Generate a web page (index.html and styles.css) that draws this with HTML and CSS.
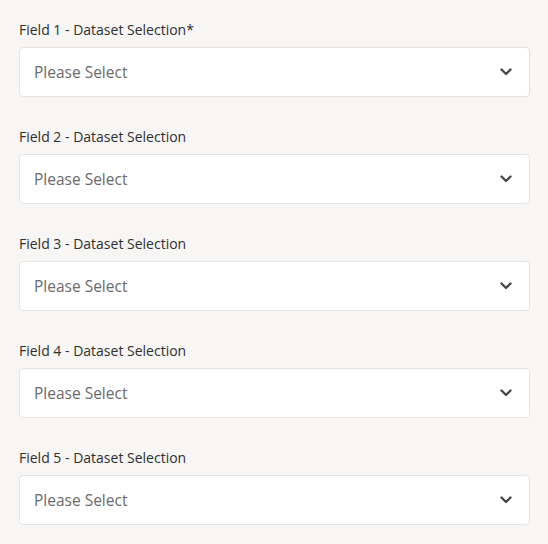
FILE: index.html
```html
<!DOCTYPE html>
<html>
<head>
<meta charset="utf-8">
<link rel="stylesheet" href="styles.css">
</head>
<body>
<div class="form">
  <div class="field">
    <div class="label">Field 1 - Dataset Selection*</div>
    <div class="select"><span class="placeholder">Please Select</span><svg class="chev" width="12" height="8" viewBox="0 0 12 8"><path d="M1.5 1.5 L6 6 L10.5 1.5" fill="none" stroke="#4a4a4a" stroke-width="2.4" stroke-linecap="round" stroke-linejoin="round"/></svg></div>
  </div>
  <div class="field">
    <div class="label">Field 2 - Dataset Selection</div>
    <div class="select"><span class="placeholder">Please Select</span><svg class="chev" width="12" height="8" viewBox="0 0 12 8"><path d="M1.5 1.5 L6 6 L10.5 1.5" fill="none" stroke="#4a4a4a" stroke-width="2.4" stroke-linecap="round" stroke-linejoin="round"/></svg></div>
  </div>
  <div class="field">
    <div class="label">Field 3 - Dataset Selection</div>
    <div class="select"><span class="placeholder">Please Select</span><svg class="chev" width="12" height="8" viewBox="0 0 12 8"><path d="M1.5 1.5 L6 6 L10.5 1.5" fill="none" stroke="#4a4a4a" stroke-width="2.4" stroke-linecap="round" stroke-linejoin="round"/></svg></div>
  </div>
  <div class="field">
    <div class="label">Field 4 - Dataset Selection</div>
    <div class="select"><span class="placeholder">Please Select</span><svg class="chev" width="12" height="8" viewBox="0 0 12 8"><path d="M1.5 1.5 L6 6 L10.5 1.5" fill="none" stroke="#4a4a4a" stroke-width="2.4" stroke-linecap="round" stroke-linejoin="round"/></svg></div>
  </div>
  <div class="field">
    <div class="label">Field 5 - Dataset Selection</div>
    <div class="select"><span class="placeholder">Please Select</span><svg class="chev" width="12" height="8" viewBox="0 0 12 8"><path d="M1.5 1.5 L6 6 L10.5 1.5" fill="none" stroke="#4a4a4a" stroke-width="2.4" stroke-linecap="round" stroke-linejoin="round"/></svg></div>
  </div>
</div>
</body>
</html>
```
FILE: styles.css
```css
html, body {
  margin: 0;
  padding: 0;
  background: #f7f6f4;
}
body {
  font-family: "Open Sans", "Noto Sans", sans-serif;
}
.form {
  display: flex;
  flex-direction: column;
  gap: 30px;
  padding: 20px 18px 0 19px;
}
.field {
  display: flex;
  flex-direction: column;
  gap: 8px;
}
.label {
  font-size: 14px;
  line-height: 19px;
  color: #2f2f2f;
}
.select {
  height: 48px;
  box-sizing: content-box;
  border: 1px solid #e4e3e1;
  border-radius: 4px;
  background: #fff;
  display: flex;
  align-items: center;
  justify-content: space-between;
  padding: 0 17px 0 14px;
}
.placeholder {
  font-size: 15.5px;
  color: #6a6a6a;
}
.chev {
  display: block;
}
```
